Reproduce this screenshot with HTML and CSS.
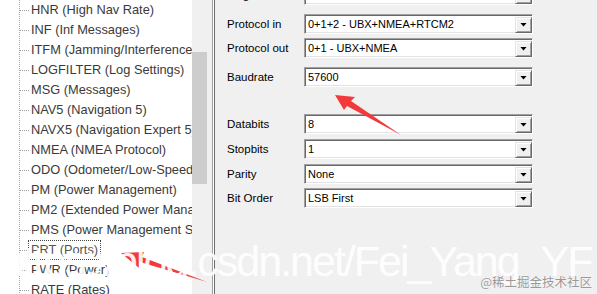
FILE: index.html
```html
<!DOCTYPE html>
<html lang="zh-CN">
<head>
    <meta charset="UTF-8">
    <meta name="viewport" content="width=device-width, initial-scale=1.0">
    <title>PRT (Ports)</title>
    <link rel="stylesheet" href="styles.css">
</head>
<body>
    <div class="window">
        <!-- 左侧消息树 -->
        <div class="tree">
            <ul class="tree-list">
                <li><span class="node">HNR (High Nav Rate)</span></li>
                <li><span class="node">INF (Inf Messages)</span></li>
                <li><span class="node">ITFM (Jamming/Interference Monitor)</span></li>
                <li><span class="node">LOGFILTER (Log Settings)</span></li>
                <li><span class="node">MSG (Messages)</span></li>
                <li><span class="node">NAV5 (Navigation 5)</span></li>
                <li><span class="node">NAVX5 (Navigation Expert 5)</span></li>
                <li><span class="node">NMEA (NMEA Protocol)</span></li>
                <li><span class="node">ODO (Odometer/Low-Speed COG Filter)</span></li>
                <li><span class="node">PM (Power Management)</span></li>
                <li><span class="node">PM2 (Extended Power Management)</span></li>
                <li><span class="node">PMS (Power Management Setup)</span></li>
                <li><span class="node selected">PRT (Ports)</span></li>
                <li><span class="node">PWR (Power)</span></li>
                <li><span class="node">RATE (Rates)</span></li>
            </ul>
        </div>
        <div class="scrollbar"><div class="thumb"></div></div>
        <div class="splitter"></div>

        <!-- 右侧端口设置 -->
        <div class="form">
            <div class="row row-first">
                <span class="label">Target</span>
                <div class="combo"><span class="value">1 - UART1</span><span class="drop"></span></div>
            </div>
            <div class="row gap-md">
                <span class="label">Protocol in</span>
                <div class="combo"><span class="value">0+1+2 - UBX+NMEA+RTCM2</span><span class="drop"></span></div>
            </div>
            <div class="row">
                <span class="label">Protocol out</span>
                <div class="combo"><span class="value">0+1 - UBX+NMEA</span><span class="drop"></span></div>
            </div>
            <div class="row gap-md">
                <span class="label">Baudrate</span>
                <div class="combo"><span class="value">57600</span><span class="drop"></span></div>
            </div>
            <div class="row gap-lg">
                <span class="label">Databits</span>
                <div class="combo"><span class="value">8</span><span class="drop"></span></div>
            </div>
            <div class="row gap-sm">
                <span class="label">Stopbits</span>
                <div class="combo"><span class="value">1</span><span class="drop"></span></div>
            </div>
            <div class="row gap-sm">
                <span class="label">Parity</span>
                <div class="combo"><span class="value">None</span><span class="drop"></span></div>
            </div>
            <div class="row">
                <span class="label">Bit Order</span>
                <div class="combo"><span class="value">LSB First</span><span class="drop"></span></div>
            </div>
        </div>
    </div>

    <!-- 标注箭头 -->
    <svg class="marks" width="597" height="294" viewBox="0 0 597 294">
        <polygon points="335,95 355,97 351,101 401,135 347,106 344,110" fill="#f23a3c"/>
        <polygon points="121,253 144,252 142,257 207,282 140,262 139,268" fill="#f23a3c"/>
    </svg>

    <div class="watermark">https://blog.csdn.net/Fei_Yang_YF</div>
    <div class="source">@稀土掘金技术社区</div>
</body>
</html>
```

FILE: styles.css
```css
/* 基础样式 */
body {
    margin: 0;
    width: 597px;
    height: 294px;
    overflow: hidden;
    position: relative;
    background: #f0f0f0;
    font-family: 'Liberation Sans', Arial, sans-serif;
}

.window {
    display: flex;
    height: 294px;
}

/* 消息树 */
.tree {
    width: 192px;
    flex-shrink: 0;
    background: #fff;
    overflow: hidden;
}
.tree-list {
    list-style: none;
    margin: 0;
    padding: 0;
    height: 294px;
    background-image: linear-gradient(to bottom, #a0a0a0 50%, transparent 50%);
    background-size: 1px 2px;
    background-repeat: repeat-y;
    background-position: 19px 0;
}
.tree-list li {
    display: flex;
    align-items: center;
    height: 20px;
    white-space: nowrap;
}
.tree-list li::before {
    content: '';
    width: 9px;
    height: 1px;
    margin-left: 20px;
    flex-shrink: 0;
    background-image: linear-gradient(to right, #a0a0a0 50%, transparent 50%);
    background-size: 2px 1px;
}
.node {
    font-size: 12.8px;
    line-height: 18px;
    color: #3a3a3a;
    padding: 0 2px;
    margin-left: -1px;
    border: 1px solid transparent;
}
.node.selected {
    border: 1px dotted #444;
    color: #555;
}

/* 滚动条 */
.scrollbar {
    width: 17px;
    flex-shrink: 0;
    background: #f0f0f0;
}
.thumb {
    width: 15px;
    height: 132px;
    margin-top: 52px;
    background: #cdcdcd;
}

.splitter {
    width: 3px;
    margin-left: 3px;
    flex-shrink: 0;
    background: linear-gradient(to right, #a0a0a0 1px, #fff 1px, #fff 2px, #6d6d6d 2px);
}

/* 设置表单 */
.form {
    flex: 1;
    padding-left: 12px;
    display: flex;
    flex-direction: column;
}
.row {
    display: flex;
    align-items: center;
    height: 20px;
    margin-top: 4px;
}
.row-first {
    margin-top: -15px;
}
.gap-sm {
    margin-top: 5px;
}
.gap-md {
    margin-top: 9px;
}
.gap-lg {
    margin-top: 27px;
}
.label {
    width: 77px;
    font-size: 11.5px;
    color: #000;
}
.combo {
    width: 229px;
    height: 20px;
    box-sizing: border-box;
    display: flex;
    align-items: center;
    background: #fff;
    border: 1px solid;
    border-color: #a0a0a0 #fff #fff #a0a0a0;
    box-shadow: inset 1px 1px #696969, inset -1px -1px #e3e3e3;
}
.value {
    flex: 1;
    padding-left: 3px;
    font-size: 11px;
    color: #000;
}
.drop {
    width: 17px;
    height: 16px;
    margin: 1px 0 0;
    box-sizing: border-box;
    display: flex;
    align-items: center;
    justify-content: center;
    background: #f0f0f0;
    border: 1px solid;
    border-color: #e3e3e3 #696969 #696969 #e3e3e3;
    box-shadow: inset 1px 1px #fff, inset -1px -1px #a0a0a0;
}
.drop::after {
    content: '';
    width: 7px;
    height: 4px;
    background: #000;
    clip-path: polygon(0 0, 100% 0, 50% 100%);
}

/* 标注与水印 */
.marks {
    position: absolute;
    top: 0;
    left: 0;
    pointer-events: none;
}
.watermark {
    position: absolute;
    left: 1px;
    top: 240px;
    font-size: 43px;
    line-height: 1;
    letter-spacing: -2px;
    white-space: nowrap;
    color: rgba(255, 255, 255, 0.92);
}
.source {
    position: absolute;
    right: 5px;
    bottom: 3px;
    font-family: 'Noto Sans CJK SC', sans-serif;
    font-size: 12.5px;
    color: #999;
    text-shadow: 0 0 1px #fff, 0 0 1px #fff;
}
```
